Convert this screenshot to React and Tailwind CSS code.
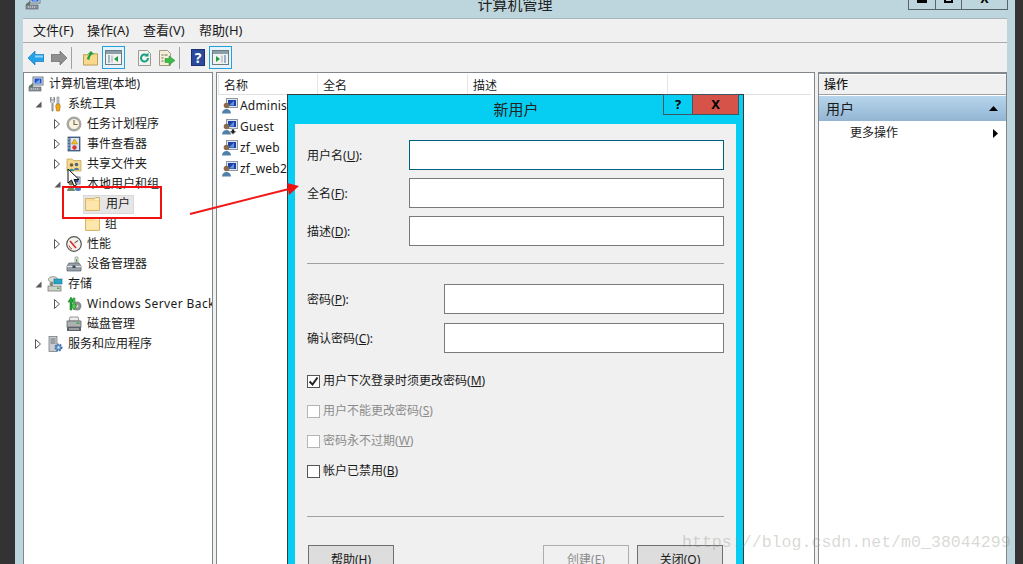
import React from 'react';

const FONT = 'font-["Noto_Sans","Noto_Sans_CJK_SC",sans-serif]';

// --- small drawn icons (16x16 unless noted) ---
const Svg = ({ w = 16, h = 16, vb = '0 0 16 16', children }) => (
  <svg width={w} height={h} viewBox={vb} className="shrink-0 block">{children}</svg>
);

const Computer = () => (
  <Svg>
    <rect x="5" y="1" width="10" height="8" fill="#dfe6ef" stroke="#6f7d8c" />
    <rect x="6.5" y="2.5" width="7" height="5" fill="#1f4fc4" />
    <path d="M7 7l5-4v4z" fill="#6ea4ee" />
    <path d="M5 7L1 10v2h4z" fill="#5b7c6a" />
    <rect x="1" y="11" width="12" height="4" fill="#8a9299" stroke="#555c63" strokeWidth=".6" />
    <path d="M3 13h1M5 13h1M7 13h1M9 13h1" stroke="#e4e7ea" />
  </Svg>
);
const Tools = () => (
  <Svg>
    <path d="M5 15V7.5C3 6.5 3 3 4 1v3h3V1c1 2 1 5.5-1 6.5V15z" fill="#dfe2e4" stroke="#6c7075" strokeWidth=".8" />
    <rect x="10" y="1" width="2" height="7" fill="#c9ccd0" stroke="#6c7075" strokeWidth=".5" />
    <path d="M9.5 8h3l.8 2-.8 5h-3l-.8-5z" fill="#f0a81c" stroke="#a86e08" strokeWidth=".6" />
  </Svg>
);
const Clock = () => (
  <Svg>
    <circle cx="8" cy="8" r="7.5" fill="#a9a9a3" />
    <circle cx="8" cy="8" r="5.5" fill="#f6f1e2" stroke="#8e8e86" strokeWidth=".6" />
    <path d="M8 4v4.5h3.5" fill="none" stroke="#7c6a3a" strokeWidth="1.1" />
  </Svg>
);
const EventLog = () => (
  <Svg>
    <rect x="2" y="1" width="12" height="14" fill="#4d6f9c" stroke="#2e4568" strokeWidth=".7" />
    <rect x="4.5" y="2" width="8.5" height="12" fill="#dfe5ee" />
    <path d="M8.5 3l3 5h-6z" fill="#f2c21d" stroke="#a77c05" strokeWidth=".5" />
    <circle cx="8.5" cy="11.5" r="2.2" fill="#d8343a" />
    <path d="M2 3h1.5M2 6h1.5M2 9h1.5M2 12h1.5" stroke="#c9d4e2" />
  </Svg>
);
const SharedFolder = () => (
  <Svg>
    <path d="M1 3h5l1.5 1.500H15V15H1z" fill="#f5d98c" stroke="#bd9c50" strokeWidth=".7" />
    <circle cx="5.500" cy="9" r="1.800" fill="#7c5a3c" />
    <path d="M3 15c0-3 5-3 5 0z" fill="#2f8f8c" />
    <circle cx="10.500" cy="8.500" r="1.800" fill="#46668f" />
    <path d="M8 14c0-3 5-3 5 0z" fill="#55779f" />
  </Svg>
);
const UsersGroup = () => (
  <Svg>
    <rect x="6" y="1" width="8" height="7" fill="#dfe6ef" stroke="#6f7d8c" />
    <rect x="7.500" y="2.500" width="5" height="4" fill="#22429c" />
    <circle cx="5" cy="7" r="2.500" fill="#7c7f62" />
    <path d="M1 15c0-5 8-5 8 0z" fill="#6f8c6a" />
    <rect x="9" y="10" width="6" height="5" rx="2" fill="#4f81bd" />
  </Svg>
);
const Folder = () => (
  <Svg w={15} h={14} vb="0 0 15 14">
    <path d="M.5 1.500h9l1-1h4v13H.5z" fill="#fbdc92" stroke="#d5b570" />
    <path d="M1.500 4h12v8.500h-12z" fill="#fde6ac" />
    <path d="M10 1.500h4V3h-4z" fill="#fff3cf" />
  </Svg>
);
const Gauge = () => (
  <Svg>
    <circle cx="8" cy="8" r="7.300" fill="#f3f1ec" stroke="#55564f" strokeWidth="1.200" />
    <path d="M4 5l6 7" stroke="#d32a2a" strokeWidth="1.600" />
    <path d="M12 4.500L8.500 7" stroke="#3d3d3d" strokeWidth="1" />
    <path d="M3 9.500A5 5 0 0 0 6 13" fill="none" stroke="#c33" strokeWidth="1" />
  </Svg>
);
const DeviceMgr = () => (
  <Svg>
    <path d="M9 1h3v6H9z" fill="#e6ece4" stroke="#7b8a7a" strokeWidth=".6" />
    <path d="M10 3h1v3h-1z" fill="#49a84c" />
    <path d="M3 7h10l2 3v5H1v-5z" fill="#97a0a8" stroke="#565d64" strokeWidth=".7" />
    <path d="M1 10.500h14" stroke="#e3e6e9" />
    <rect x="6.500" y="9.500" width="3" height="2.500" fill="#3f464d" />
  </Svg>
);
const Storage = () => (
  <Svg>
    <ellipse cx="6" cy="3.500" rx="4.500" ry="2.800" fill="#d9dcd6" stroke="#72776e" strokeWidth=".7" />
    <rect x="7" y="3" width="8" height="5" fill="#2ba3c7" stroke="#1c6f88" strokeWidth=".6" />
    <circle cx="4.500" cy="8" r="2" fill="#7c8a78" />
    <rect x="1" y="10" width="13" height="5" fill="#cfd2cc" stroke="#666b63" strokeWidth=".7" />
    <rect x="10" y="11.500" width="2.500" height="1.500" fill="#4caf50" />
  </Svg>
);
const Backup = () => (
  <Svg>
    <circle cx="11" cy="10" r="4.500" fill="#8d8f8f" />
    <circle cx="11" cy="10" r="1.500" fill="#e2e2e2" />
    <path d="M4 14V6H2l3-5 3 5H6v8z" fill="#27a83a" stroke="#136b20" strokeWidth=".5" />
    <path d="M9 2v7h2l-3 5-3-5h2V2z" fill="#4ccf54" stroke="#136b20" strokeWidth=".5" />
  </Svg>
);
const Disk = () => (
  <Svg>
    <path d="M4 1h8l1 4H3z" fill="#eceded" stroke="#6a6e70" strokeWidth=".7" />
    <rect x="1" y="5" width="14" height="6" fill="#adb1b3" stroke="#55595b" strokeWidth=".7" />
    <rect x="10.500" y="6.500" width="3" height="1.500" fill="#45a849" />
    <rect x="1" y="11" width="14" height="4" fill="#5e6264" />
    <path d="M3 13h10" stroke="#d6d8d9" />
  </Svg>
);
const Services = () => (
  <Svg>
    <rect x="2" y="0.500" width="8" height="15" fill="#c9ccd0" stroke="#6a6f75" strokeWidth=".7" />
    <path d="M3.500 3h5M3.500 5h5M3.500 7h5" stroke="#6a6f75" />
    <circle cx="11.500" cy="11.500" r="3" fill="#6fa1d6" stroke="#3c6ea6" strokeWidth="2" strokeDasharray="1.500 1" />
    <circle cx="11.500" cy="11.500" r="1" fill="#e8f0f8" />
  </Svg>
);
const UserIcon = ({ guest }) => (
  <Svg>
    <rect x="4.500" y="0.500" width="11" height="9" fill="#e1e6ec" stroke="#8a96a3" />
    <rect x="6" y="2" width="8" height="6" fill="#1d3fa8" />
    <path d="M7 7.500l5-5v5z" fill="#5f93e0" />
    <circle cx="4.500" cy="7.500" r="2.800" fill="#8a6a4a" />
    <path d="M0 15.500c0-6 9-6 9 0z" fill="#4f81a8" />
    {guest && <path d="M9.500 10h3v2h2l-3.500 3.500L7.500 12h2z" fill="#222" stroke="#fff" strokeWidth=".6" />}
  </Svg>
);

const Arrow = ({ open }) =>
  open ? (
    <svg width="7" height="7" viewBox="0 0 7 7" className="block"><path d="M6.500 0.500v6h-6z" fill="#595959" /></svg>
  ) : (
    <svg width="6" height="10" viewBox="0 0 6 10" className="block"><path d="M.5.500l5 4.500-5 4.500z" fill="#fff" stroke="#555" /></svg>
  );

const TREE = [
  { pad: 'pl-[4px]', icon: <Computer />, label: '计算机管理(本地)' },
  { pad: 'pl-[10px]', arrow: 'open', icon: <Tools />, label: '系统工具' },
  { pad: 'pl-[29px]', arrow: 'closed', icon: <Clock />, label: '任务计划程序' },
  { pad: 'pl-[29px]', arrow: 'closed', icon: <EventLog />, label: '事件查看器' },
  { pad: 'pl-[29px]', arrow: 'closed', icon: <SharedFolder />, label: '共享文件夹' },
  { pad: 'pl-[29px]', arrow: 'open', icon: <UsersGroup />, label: '本地用户和组' },
  { pad: 'pl-[48px]', arrow: 'none', icon: <Folder />, label: '用户', selected: true },
  { pad: 'pl-[48px]', arrow: 'none', icon: <Folder />, label: '组' },
  { pad: 'pl-[29px]', arrow: 'closed', icon: <Gauge />, label: '性能' },
  { pad: 'pl-[29px]', arrow: 'none', icon: <DeviceMgr />, label: '设备管理器' },
  { pad: 'pl-[10px]', arrow: 'open', icon: <Storage />, label: '存储' },
  { pad: 'pl-[29px]', arrow: 'closed', icon: <Backup />, label: 'Windows Server Backup', wide: true },
  { pad: 'pl-[29px]', arrow: 'none', icon: <Disk />, label: '磁盘管理' },
  { pad: 'pl-[10px]', arrow: 'closed', icon: <Services />, label: '服务和应用程序' },
];

const USERS = [
  { name: 'Administrator' },
  { name: 'Guest', guest: true },
  { name: 'zf_web' },
  { name: 'zf_web2' },
];

const MENUS = [
  ['文件(F)', 'w-[54px]'],
  ['操作(A)', 'w-[56px]'],
  ['查看(V)', 'w-[56px]'],
  ['帮助(H)', 'w-[60px]'],
];

function TreeRow({ row }) {
  return (
    <div className={`flex h-[20px] items-center whitespace-nowrap ${row.pad}`}>
      {row.arrow && (
        <span className="flex w-[13px] shrink-0 items-center pl-[1px]">
          {row.arrow !== 'none' && <Arrow open={row.arrow === 'open'} />}
        </span>
      )}
      <span
        className={
          row.selected
            ? 'flex h-[19px] items-center gap-[6px] -ml-[2px] pl-[1px] pr-[3px] border border-[#d9d9d9] bg-[#e6e6e6]'
            : 'flex items-center gap-[5px]'
        }
      >
        {row.icon}
        <span className={row.wide ? 'tracking-[0.4px]' : ''}>{row.label}</span>
      </span>
    </div>
  );
}

const ToolBtn = ({ active, children, className = '' }) => (
  <div
    className={`flex h-[23px] items-center justify-center ${className} ${
      active ? 'w-[23px] border border-[#26a0da] bg-[#e5f3fb]' : ''
    }`}
  >
    {children}
  </div>
);

const Sep = ({ className = '' }) => <div className={`h-[22px] w-px bg-[#a0a0a0] ${className}`} />;

const PanelIcon = ({ side }) => (
  <Svg w={17} h={15} vb="0 0 17 15">
    <rect x=".5" y=".5" width="16" height="14" fill="#f2f2f2" stroke="#6d7a80" />
    <rect x="1" y="1" width="15" height="3" fill="#8aa0a8" />
    {side === 'left' ? (
      <>
        <path d="M3 6h2M3 8h2M3 10h2M3 12h2" stroke="#5c7a8c" />
        <path d="M7 5.500v7" stroke="#9aa7ad" />
        <path d="M13 6v6l-4-3z" fill="#1f9d3d" />
      </>
    ) : (
      <>
        <path d="M12 6h2M12 8h2M12 10h2M12 12h2" stroke="#3a6ea8" />
        <path d="M10 5.500v7" stroke="#9aa7ad" />
        <path d="M4 6v6l4-3z" fill="#1f9d3d" />
      </>
    )}
  </Svg>
);

function Toolbar() {
  return (
    <div className="flex h-[29px] shrink-0 items-center bg-[#f0f0f0] pl-[5px]">
      <Svg w={16} h={14} vb="0 0 16 14">
        <path d="M0 7l7-7v3.500h9v7H7V14z" fill="#22a2e8" stroke="#0f6fb4" strokeWidth=".6" />
        <path d="M7 4.500h8v2H7z" fill="#8ed4f8" />
      </Svg>
      <div className="w-[7px]" />
      <Svg w={16} h={14} vb="0 0 16 14">
        <path d="M16 7L9 0v3.500H0v7h9V14z" fill="#8f8f8f" stroke="#5d5d5d" strokeWidth=".6" />
      </Svg>
      <Sep className="ml-[4px]" />
      <div className="w-[11px]" />
      <Svg w={15} h={16}>
        <path d="M.5 4.500h5l1-1h9v12H.5z" fill="#f8d88d" stroke="#b89a50" />
        <path d="M4 9c1-3 2-4 3-5H5l3.500-3.500L12 4h-2c-1 1-3 2-3 6z" fill="#1da23c" />
      </Svg>
      <ToolBtn active className="ml-[4px]"><PanelIcon side="left" /></ToolBtn>
      <div className="ml-[13px]">
        <Svg w={13} h={16} vb="0 0 13 16">
          <path d="M.5.500h9l3 3v12H.5z" fill="#f4f4ee" stroke="#9b9b92" />
          <path d="M10 8a3.500 3.500 0 1 1-1.200-2.600" fill="none" stroke="#16a085" strokeWidth="2" />
          <path d="M10.500 2.500v4h-4z" fill="#16a085" />
        </Svg>
      </div>
      <div className="ml-[8px]">
        <Svg w={16} h={16}>
          <path d="M.5.500h8l3 3v12H.5z" fill="#f5efd9" stroke="#a09a85" />
          <path d="M2.500 5h2M2.500 8h2M2.500 11h2M5.500 5h3" stroke="#6a6754" />
          <path d="M6 8.500h4V6l6 4.500-6 4.500v-2.500H6z" fill="#3fb94a" stroke="#1d8a2c" strokeWidth=".5" />
        </Svg>
      </div>
      <Sep className="ml-[4px]" />
      <div className="ml-[11px] flex h-[17px] w-[14px] items-center justify-center bg-[#2b4a9c] border border-[#1a2f70] text-[14px] font-bold leading-none text-white">?</div>
      <ToolBtn active className="ml-[4px]"><PanelIcon side="right" /></ToolBtn>
    </div>
  );
}

function DialogInput({ wide, focus }) {
  return (
    <div
      className={`h-[30px] border bg-white ${wide ? 'w-[315px]' : 'w-[280px]'} ${
        focus ? 'border-[#00607f]' : 'border-[#7a7a7a]'
      }`}
    />
  );
}

function Field({ label, k, wide, focus }) {
  return (
    <div className="flex items-center justify-between">
      <span className="pt-[2px]">
        {label}(<u>{k}</u>):
      </span>
      <DialogInput wide={wide} focus={focus} />
    </div>
  );
}

function Check({ checked, disabled, label, k }) {
  return (
    <div className={`flex h-[30px] items-center gap-[3px] ${disabled ? 'text-[#8c8c8c]' : ''}`}>
      <span
        className={`flex h-[13px] w-[13px] items-center justify-center border bg-white ${
          disabled ? 'border-[#b4b4b4]' : 'border-[#555]'
        }`}
      >
        {checked && (
          <svg width="11" height="11" viewBox="0 0 11 11"><path d="M1.500 5.500l3 3 5-7" fill="none" stroke="#222" strokeWidth="2" /></svg>
        )}
      </span>
      <span>
        {label}(<u>{k}</u>)
      </span>
    </div>
  );
}

function NewUserDialog() {
  return (
    <div className="absolute left-[287px] top-[94px] w-[457px] border border-[#3a3a3a] bg-[#06cdf2] px-[7px] pb-[7px] text-[12px] text-[#1a1a1a]">
      <div className="relative flex h-[29px] items-center justify-center pl-[1px]">
        <span className="text-[15px] leading-none pb-[1px] text-[#222]">新用户</span>
        <div className="absolute -right-[3px] -top-px flex h-[21px] border border-[#3f5560]">
          <span className="flex w-[29px] items-center justify-center border-r border-[#3f5560] text-[13px] font-bold text-black">?</span>
          <span className="flex w-[45px] items-center justify-center bg-[#d6534a] text-[13px] font-bold text-black">X</span>
        </div>
      </div>
      <div className="h-[520px] bg-[#f0f0f0] px-[12px] pt-[16px]">
        <div className="flex flex-col gap-[8px]">
          <Field label="用户名" k="U" wide focus />
          <Field label="全名" k="F" wide />
          <Field label="描述" k="D" wide />
        </div>
        <div className="mt-[17px] h-px bg-[#a0a0a0]" />
        <div className="mt-[20px] flex flex-col gap-[9px]">
          <Field label="密码" k="P" />
          <Field label="确认密码" k="C" />
        </div>
        <div className="mt-[13px]">
          <Check checked label="用户下次登录时须更改密码" k="M" />
          <Check disabled label="用户不能更改密码" k="S" />
          <Check disabled label="密码永不过期" k="W" />
          <Check label="帐户已禁用" k="B" />
        </div>
        <div className="mt-[30px] h-px bg-[#a0a0a0]" />
        <div className="mt-[28px] flex pl-[1px] pr-[1px]">
          <button className="h-[30px] w-[86px] border border-[#707070] bg-[#dddddd] pb-[1px]">帮助(H)</button>
          <button className="ml-auto h-[30px] w-[86px] border border-[#adadad] bg-[#f0f0f0] text-[#8c8c8c]">创建(E)</button>
          <button className="ml-[8px] h-[30px] w-[86px] border border-[#707070] bg-[#dddddd]">关闭(O)</button>
        </div>
      </div>
    </div>
  );
}

export default function App() {
  return (
    <div className={`relative h-[564px] w-[1023px] overflow-hidden bg-[#333333] px-[15px] ${FONT} text-[12px] text-[#1a1a1a]`}>
      <div className="flex h-full w-[1000px] flex-col bg-[#bdd5dc] px-[8px]">
        {/* title bar, its top is cut off in the picture */}
        <div className="relative flex h-[18px] shrink-0 items-start justify-center">
          <span className="-mt-[6px] text-[15px] leading-[20px] text-[#222]">计算机管理</span>
          <div className="absolute left-[2px] -top-[6px]"><Computer /></div>
          <div className="absolute -right-px top-0 flex h-[10px] border-x border-b border-[#5a6468]">
            <span className="flex w-[27px] justify-center border-r border-[#5a6468]"><span className="h-[3px] w-[10px] bg-black" /></span>
            <span className="flex w-[26px] justify-center border-r border-[#5a6468]"><span className="h-[3px] w-[9px] border-x-2 border-b-2 border-black" /></span>
            <span className="flex w-[45px] justify-center overflow-hidden">
              <span className="-mt-[7px] text-[12px] font-bold leading-[12px] text-black">X</span>
            </span>
          </div>
        </div>

        <div className="flex min-h-0 flex-1 flex-col border-t border-[#a9b5ba] bg-[#f0f0f0]">
          {/* menu */}
          <div className="flex h-[24px] shrink-0 items-center border-b border-[#ababab] pl-[10px] text-[13px] text-[#1a1a1a]">
            {MENUS.map(([m, w]) => (
              <span key={m} className={w}>{m}</span>
            ))}
          </div>
          <Toolbar />

          {/* panes */}
          <div className="flex min-h-0 flex-1 bg-[#f0f0f0]">
            <div className="w-[190px] shrink-0 overflow-hidden border border-b-0 border-[#82878c] bg-white pt-px text-[12px]">
              {TREE.map(row => (
                <TreeRow key={row.label} row={row} />
              ))}
            </div>
            <div className="ml-[3px] w-[599px] shrink-0 overflow-hidden border border-b-0 border-[#82878c] bg-white">
              <div className="mx-px mr-[3px] flex h-[22px] border-b border-[#e0e0e0] pt-px">
                <span className="flex w-[100px] items-center border-x border-[#e5e5e5] pl-[5px] pt-[3px]">名称</span>
                <span className="flex w-[150px] items-center border-r border-[#e5e5e5] pl-[5px] pt-[3px]">全名</span>
                <span className="flex w-[200px] items-center border-r border-[#e5e5e5] pl-[5px] pt-[3px]">描述</span>
              </div>
              <div className="pl-[5px]">
                {USERS.map(u => (
                  <div key={u.name} className="flex h-[21px] items-center gap-[2px] whitespace-nowrap tracking-[0.2px]">
                    <UserIcon guest={u.guest} />
                    <span>{u.name}</span>
                  </div>
                ))}
              </div>
            </div>
            <div className="ml-[3px] flex-1 border-x border-t-2 border-b-0 border-[#82878c] bg-white pt-px">
              <div className="flex h-[20px] items-center border-b border-[#a0a0a0] bg-[#f0f0f0] pl-[5px] font-medium">操作</div>
              <div className="mt-px flex h-[25px] items-center justify-between bg-gradient-to-b from-[#b7d6ec] to-[#93b5d4] pl-[7px] pr-[8px] text-[14px]">
                <span>用户</span>
                <svg width="9" height="5" viewBox="0 0 9 5"><path d="M0 5L4.500 0 9 5z" fill="#000" /></svg>
              </div>
              <div className="flex h-[24px] items-center justify-between pl-[31px] pr-[8px]">
                <span>更多操作</span>
                <svg width="5" height="9" viewBox="0 0 5 9"><path d="M0 0l5 4.500L0 9z" fill="#000" /></svg>
              </div>
            </div>
          </div>
        </div>
      </div>

      <NewUserDialog />

      {/* red marks drawn over the screenshot */}
      <div className="absolute left-[62px] top-[186px] h-[33px] w-[100px] border-2 border-[#f01010]" />
      <svg className="absolute left-[185px] top-[175px]" width="125" height="45" viewBox="0 0 125 45">
        <path d="M5 39L104 14" stroke="#f01818" strokeWidth="2" />
        <path d="M114 11L102 8l2 12z" fill="#f01010" />
      </svg>

      {/* mouse pointer */}
      <svg className="absolute left-[67px] top-[168px]" width="13" height="19" viewBox="0 0 13 19">
        <path d="M1 1v14l3.500-3 2.500 6 2.500-1-2.500-5.500H12z" fill="#fff" stroke="#111" strokeWidth="1" />
      </svg>

      {/* watermark */}
      <span className='absolute left-[682px] top-[533px] font-["Liberation_Mono",monospace] text-[16.600px] leading-[20px] text-[#8f8f85]/35'>
        https://blog.csdn.net/m0_38044299
      </span>
    </div>
  );
}
